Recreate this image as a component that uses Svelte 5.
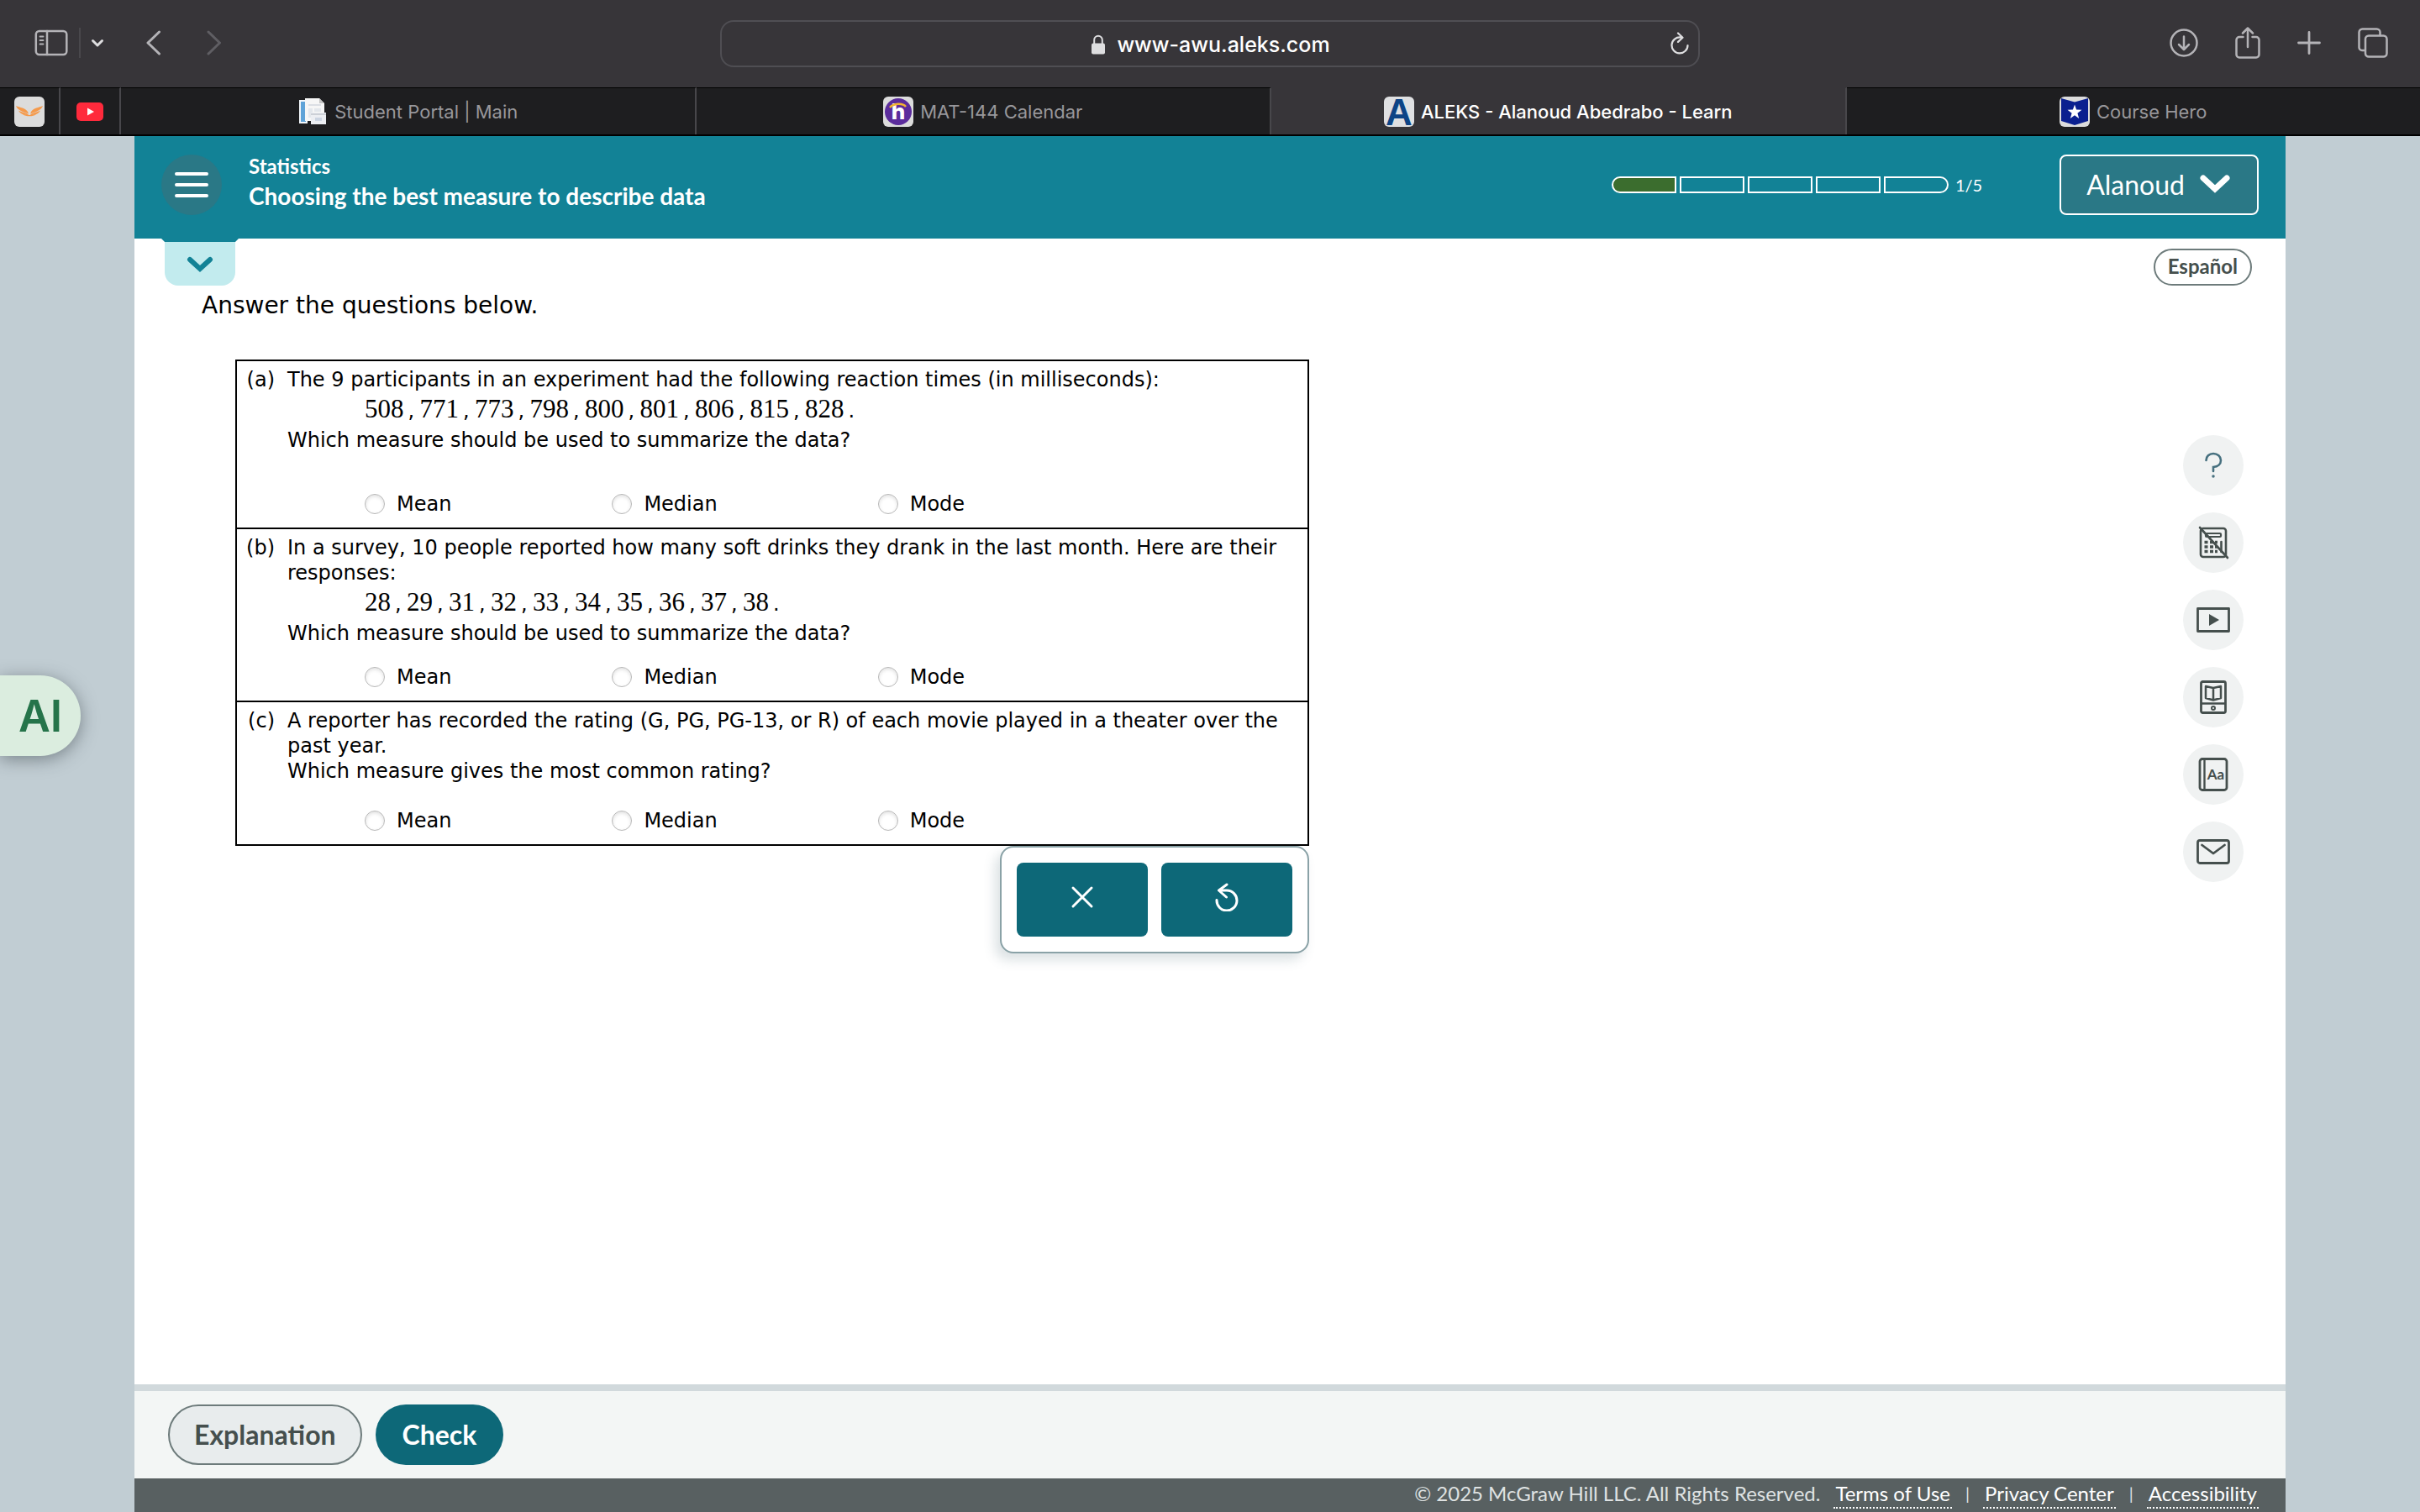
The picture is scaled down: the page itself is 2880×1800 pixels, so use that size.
<script lang="ts">
  type Question = {
    id: string
    intro: string
    data: number[]
    prompt: string
  }

  const questions: Question[] = [
    {
      id: 'a',
      intro: 'The 9 participants in an experiment had the following reaction times (in milliseconds):',
      data: [508, 771, 773, 798, 800, 801, 806, 815, 828],
      prompt: 'Which measure should be used to summarize the data?',
    },
    {
      id: 'b',
      intro: 'In a survey, 10 people reported how many soft drinks they drank in the last month. Here are their responses:',
      data: [28, 29, 31, 32, 33, 34, 35, 36, 37, 38],
      prompt: 'Which measure should be used to summarize the data?',
    },
    {
      id: 'c',
      intro: 'A reporter has recorded the rating (G, PG, PG-13, or R) of each movie played in a theater over the past year.',
      data: [],
      prompt: 'Which measure gives the most common rating?',
    },
  ]

  const measures = ['Mean', 'Median', 'Mode']
  const steps = [1, 2, 3, 4, 5]
  const current = 1

  let answers = $state<Record<string, string>>({ a: '', b: '', c: '' })

  const reset = () => {
    answers = { a: '', b: '', c: '' }
  }
</script>

<div class="window">
  <header class="toolbar">
    <div class="nav-left">
      <button class="icon-btn" aria-label="Sidebar">
        <svg width="40" height="32" viewBox="0 0 40 32" fill="none" stroke="#b4b3b7" stroke-width="2.5" stroke-linecap="round">
          <rect x="1.800" y="2" width="36.500" height="28" rx="4" />
          <path d="M15 2v28" />
          <path d="M6.500 8.500h4M6.500 13h4M6.500 17.500h4" stroke-width="1.800" />
        </svg>
      </button>
      <span class="divider"></span>
      <button class="icon-btn" aria-label="Tab groups">
        <svg width="16" height="12" viewBox="0 0 16 12" fill="none" stroke="#dedee0" stroke-width="3" stroke-linecap="round" stroke-linejoin="round">
          <path d="M2.500 3.500L8 9l5.500-5.500" />
        </svg>
      </button>
      <button class="icon-btn back" aria-label="Back">
        <svg width="18" height="30" viewBox="0 0 18 30" fill="none" stroke="#b4b3b7" stroke-width="3" stroke-linecap="round" stroke-linejoin="round">
          <path d="M15.500 2L2 15l13.500 13" />
        </svg>
      </button>
      <button class="icon-btn forward" aria-label="Forward">
        <svg width="18" height="30" viewBox="0 0 18 30" fill="none" stroke="#5f5e63" stroke-width="3" stroke-linecap="round" stroke-linejoin="round">
          <path d="M2 2l13.500 13L2 28" />
        </svg>
      </button>
    </div>

    <div class="address">
      <span class="url">
        <svg width="16" height="24" viewBox="0 0 16 24">
          <path d="M3.200 11V6.500a4.800 4.800 0 0 1 9.600 0V11" fill="none" stroke="#dedee0" stroke-width="2" />
          <rect x="0" y="10.500" width="16" height="13" rx="2" fill="#dedee0" />
        </svg>
        www-awu.aleks.com
      </span>
      <button class="icon-btn" aria-label="Reload">
        <svg width="24" height="28" viewBox="0 0 24 28" fill="none" stroke="#dedee0" stroke-width="2.200" stroke-linecap="round" stroke-linejoin="round">
          <path d="M13 6.500A9.500 9.500 0 1 0 21.500 16M10 1.500l5.500 5.200-5.500 5.200" />
        </svg>
      </button>
    </div>

    <div class="nav-right">
      <button class="icon-btn" aria-label="Downloads">
        <svg width="34" height="34" viewBox="0 0 34 34" fill="none" stroke="#b4b3b7" stroke-width="2.500" stroke-linecap="round" stroke-linejoin="round">
          <circle cx="17" cy="17" r="15.500" />
          <path d="M17 9.500v15M11 19l6 6 6-6" />
        </svg>
      </button>
      <button class="icon-btn" aria-label="Share">
        <svg width="30" height="38" viewBox="0 0 30 38" fill="none" stroke="#b4b3b7" stroke-width="2.500" stroke-linecap="round" stroke-linejoin="round">
          <path d="M9.500 12H5a3.500 3.500 0 0 0-3.500 3.500V33A3.500 3.500 0 0 0 5 36.500h20a3.500 3.500 0 0 0 3.500-3.500V15.500A3.500 3.500 0 0 0 25 12h-4.500M15 24V2M9 7.500L15 1.500l6 6" />
        </svg>
      </button>
      <button class="icon-btn" aria-label="New tab">
        <svg width="28" height="28" viewBox="0 0 28 28" fill="none" stroke="#b4b3b7" stroke-width="2.800" stroke-linecap="round">
          <path d="M14 1.500v25M1.500 14h25" />
        </svg>
      </button>
      <button class="icon-btn" aria-label="Show tabs">
        <svg width="36" height="36" viewBox="0 0 36 36" fill="none" stroke="#b4b3b7" stroke-width="2.500" stroke-linecap="round" stroke-linejoin="round">
          <rect x="9" y="9.500" width="25.500" height="25" rx="4" />
          <path d="M8.500 27H5a3.500 3.500 0 0 1-3.500-3.500V5.500a4 4 0 0 1 4-4h17a4 4 0 0 1 4 4V9" />
        </svg>
      </button>
    </div>
  </header>

  <nav class="tabs" aria-label="Tabs">
    <a class="pinned" href="#pinned" aria-label="Pinned tab">
      <svg width="36" height="36" viewBox="0 0 36 36">
        <rect width="36" height="36" rx="6" fill="#dcdcdc" />
        <g fill="#f59a4c">
          <path d="M2 11c5 2 11 2.500 14 7l1 2.500C12 18.500 4 17 2 11z" />
          <path d="M5 16.500c4 2.500 9 2 12 5.500C12 22 7 21 5 16.500z" />
          <path d="M34 11c-5 2-11 2.500-14 7l-1 2.500c5-2 13-3.500 15-9.500z" />
          <path d="M31 16.500c-4 2.500-9 2-12 5.500 5 0 10-1 12-5.500z" />
          <path d="M10 21c3 .5 6 .5 8 1 2-.5 5-.5 8-1-2 2-5 2.200-8 2.200S12 23 10 21z" />
        </g>
      </svg>
    </a>
    <a class="pinned" href="#youtube" aria-label="YouTube">
      <svg width="32" height="22" viewBox="0 0 32 22">
        <rect width="32" height="22" rx="5" fill="#ff2a3c" />
        <path d="M13 6.500v9l8-4.500z" fill="#fff" />
      </svg>
    </a>
    <a class="tab" href="#portal">
      <svg width="36" height="36" viewBox="0 0 36 36">
        <rect x="2" y="4" width="10" height="28" fill="#f2f6fa" />
        <rect x="4" y="6" width="6" height="24" fill="#5fa3d8" />
        <path d="M9 2h17l6 6v21H9z" fill="#f6f6f6" />
        <path d="M26 2v6h6z" fill="#c4c4c4" />
        <path d="M13 10h15" stroke="#d3d7de" stroke-width="1.500" />
        <path d="M13 14h5v11h-5zM20 14h8v4h-8z" fill="#e3e7ec" />
        <rect x="16" y="19" width="18" height="14" fill="#eceef2" />
        <path d="M16 21h18" stroke="#c2c6cd" stroke-width="1.500" />
        <rect x="21" y="25" width="8" height="4" fill="#ccd5e2" />
      </svg>
      Student Portal | Main
    </a>
    <a class="tab" href="#calendar">
      <svg width="36" height="36" viewBox="0 0 36 36">
        <rect width="36" height="36" rx="6" fill="#dcdcdc" />
        <circle cx="18" cy="18" r="16" fill="#5b2c9c" />
        <text x="18" y="27" text-anchor="middle" font-size="26" font-weight="800" font-family="Inter, sans-serif" fill="#fff">h</text>
        <path d="M8 13c4-5 15-6 19-1" fill="none" stroke="#f2b431" stroke-width="2.500" />
      </svg>
      MAT-144 Calendar
    </a>
    <a class="tab active" href="#aleks" aria-current="page">
      <svg class="letter-icon" width="36" height="36" viewBox="0 0 36 36">
        <rect width="36" height="36" rx="6" fill="#dfe0e2" />
        <text x="18" y="34" text-anchor="middle" font-size="44" font-weight="800" font-family="'Liberation Sans', sans-serif" fill="#0c4486">A</text>
      </svg>
      ALEKS - Alanoud Abedrabo - Learn
    </a>
    <a class="tab" href="#coursehero">
      <svg width="36" height="36" viewBox="0 0 36 36">
        <rect width="36" height="36" rx="6" fill="#dcdcdc" />
        <path d="M2 2l16 4.500L34 2v27l-16 5-16-5z" fill="#0a1f8f" />
        <path d="M18 9.500l2.100 6.100 6.400.2-5.100 3.900 1.800 6.200-5.200-3.600-5.200 3.600 1.800-6.200-5.100-3.900 6.400-.2z" fill="#fff" />
      </svg>
      Course Hero
    </a>
  </nav>

  <div class="viewport">
    <button class="ai-badge">AI</button>

    <div class="page">
      <header class="lesson-bar">
        <button class="menu" aria-label="Menu">
          <svg width="40" height="32" viewBox="0 0 40 32" stroke="#fff" stroke-width="4" stroke-linecap="round">
            <path d="M2 3h36M2 16h36M2 29h36" />
          </svg>
        </button>
        <div class="titles">
          <span class="subject">Statistics</span>
          <h1>Choosing the best measure to describe data</h1>
        </div>
        <div class="progress">
          <div class="segments">
            {#each steps as step}
              <span class="segment" class:done={step <= current}></span>
            {/each}
          </div>
          <span class="count">{current}/{steps.length}</span>
        </div>
        <button class="user">
          Alanoud
          <svg width="36" height="24" viewBox="0 0 36 24" fill="none" stroke="#fff" stroke-width="7" stroke-linecap="round">
            <path d="M4 5l14 13L32 5" />
          </svg>
        </button>
      </header>

      <main class="content">
        <div class="left">
          <button class="drawer" aria-label="Show details">
            <svg width="32" height="20" viewBox="0 0 32 20" fill="none" stroke="#128296" stroke-width="6" stroke-linecap="round">
              <path d="M4 4l12 11L28 4" />
            </svg>
          </button>
          <p class="lead">Answer the questions below.</p>

          <div class="work">
            <div class="questions">
              {#each questions as q (q.id)}
                <fieldset class="question {q.id}">
                  <span class="letter">({q.id})</span>
                  <div class="body">
                    <p>{q.intro}</p>
                    {#if q.data.length}
                      <p class="data">
                        {#each q.data as n, i}<span class="num">{n}</span><span class="sep">{i < q.data.length - 1 ? ',' : '.'}</span>{/each}
                      </p>
                    {/if}
                    <p>{q.prompt}</p>
                    <div class="options">
                      {#each measures as m}
                        <label>
                          <input type="radio" name="q-{q.id}" value={m} bind:group={answers[q.id]} />
                          {m}
                        </label>
                      {/each}
                    </div>
                  </div>
                </fieldset>
              {/each}
            </div>

            <div class="actions">
              <button aria-label="Clear" onclick={reset}>
                <svg width="28" height="28" viewBox="0 0 28 28" stroke="#fff" stroke-width="3" stroke-linecap="round">
                  <path d="M3 3l22 22M25 3L3 25" />
                </svg>
              </button>
              <button aria-label="Undo" onclick={reset}>
                <svg width="28" height="34" viewBox="0 0 28 34" fill="none" stroke="#fff" stroke-width="3" stroke-linecap="round" stroke-linejoin="round">
                  <path d="M2 20.500a12 12 0 1 0 12-11.500H5M14 2L4.500 9l9 8" />
                </svg>
              </button>
            </div>
          </div>
        </div>

        <aside class="right">
          <button class="language">Español</button>
          <div class="tools">
            <button aria-label="Help">
              <svg width="40" height="40" viewBox="0 0 40 40" fill="none" stroke="#46707f" stroke-width="2.600" stroke-linecap="round">
                <path d="M11.500 14c0-4.500 3.500-8 8.500-8s9 3.500 9 8-3.500 7.500-9 8v5" />
                <circle cx="20" cy="33" r="1" fill="#46707f" stroke-width="1.500" />
              </svg>
            </button>
            <button aria-label="Calculator unavailable">
              <svg width="40" height="40" viewBox="0 0 40 40" fill="none" stroke="#454f4d" stroke-width="2.600" stroke-linecap="round">
                <rect x="5" y="3" width="30" height="34" rx="3" />
                <rect x="11" y="9" width="18" height="4" rx="1" stroke-width="2.200" />
                <path d="M9.500 19.500h4M16 19.500h4M22 19.500h3M9.500 25h4M16 25h4M22 25h3M9.500 30.500h4M16 30.500h4M22 30.500h3" stroke-width="3.500" stroke-linecap="butt" />
                <path d="M29.500 19v12" />
                <path d="M4 2l33 36" />
              </svg>
            </button>
            <button aria-label="Video">
              <svg width="40" height="40" viewBox="0 0 40 40" fill="none" stroke="#454f4d" stroke-width="2.800" stroke-linejoin="round">
                <rect x="1.500" y="6.500" width="37" height="27" />
                <path d="M15 13v14l12-7z" fill="#454f4d" stroke="none" />
              </svg>
            </button>
            <button aria-label="eBook">
              <svg width="40" height="40" viewBox="0 0 40 40" fill="none" stroke="#454f4d" stroke-width="2.800" stroke-linejoin="round">
                <rect x="5.500" y="1.500" width="29" height="37" rx="2" />
                <path d="M5.500 27.500h29M11 7l9 2 9-2v14l-9 2.500-9-2.500zM20 9v14.500" stroke-width="2.500" />
                <circle cx="20" cy="33" r="2" stroke-width="2" />
              </svg>
            </button>
            <button aria-label="Dictionary">
              <svg width="40" height="40" viewBox="0 0 40 40" fill="none" stroke="#454f4d" stroke-width="2.800">
                <rect x="4" y="1.500" width="32" height="37" rx="3" />
                <path d="M9.500 2v36" stroke-width="2.400" />
                <text x="23" y="26" text-anchor="middle" font-size="17" font-weight="700" font-family="Lato, sans-serif" fill="#454f4d" stroke="none">Aa</text>
              </svg>
            </button>
            <button aria-label="Message">
              <svg width="40" height="40" viewBox="0 0 40 40" fill="none" stroke="#454f4d" stroke-width="2.800" stroke-linecap="round" stroke-linejoin="round">
                <rect x="1.500" y="6.500" width="37" height="27" rx="2.500" />
                <path d="M6.500 12L20 22l13.500-10" />
              </svg>
            </button>
          </div>
        </aside>
      </main>

      <div class="submit-bar">
        <button class="explain">Explanation</button>
        <button class="check">Check</button>
      </div>

      <footer>
        <span class="copyright">© 2025 McGraw Hill LLC. All Rights Reserved.</span>
        <a href="#terms">Terms of Use</a>
        <span class="bar">|</span>
        <a href="#privacy">Privacy Center</a>
        <span class="bar">|</span>
        <a href="#accessibility">Accessibility</a>
      </footer>
    </div>
  </div>
</div>

<style>
  :global(body) {
    background: #c1cdd3;
  }

  .window {
    min-height: 100vh;
    display: flex;
    flex-direction: column;
    font-family: Lato, 'Open Sans', sans-serif;
  }

  button {
    font: inherit;
    border: none;
    padding: 0;
    margin: 0;
    cursor: pointer;
  }

  svg {
    display: block;
    flex: none;
  }

  .letter-icon {
    overflow: visible;
  }

  .toolbar {
    display: grid;
    grid-template-columns: 1fr 40.5% 1fr;
    align-items: center;
    height: 104px;
    background: #373539;
    font-family: Inter, 'Liberation Sans', sans-serif;
  }

  .icon-btn {
    background: none;
  }

  .nav-left,
  .nav-right {
    display: flex;
    align-items: center;
    padding-bottom: 2px;
  }

  .nav-left {
    padding-left: 41px;
  }

  .nav-right {
    justify-content: flex-end;
    gap: 44px;
    padding-right: 38px;
  }

  .divider {
    width: 2px;
    height: 36px;
    margin: 0 12px 0 13px;
    background: #49484c;
  }

  .back {
    margin-left: 50px;
  }

  .forward {
    margin-left: 54px;
  }

  .address {
    display: flex;
    align-items: center;
    height: 56px;
    box-sizing: border-box;
    border: 2px solid #4f4e53;
    border-radius: 16px;
    padding-right: 10px;
  }

  .url {
    flex: 1;
    display: flex;
    align-items: center;
    justify-content: center;
    gap: 14px;
    padding: 2px 0 0 36px;
    font-size: 25px;
    font-weight: 500;
    color: #fff;
  }

  .tabs {
    display: flex;
    height: 58px;
    box-sizing: border-box;
    background: #1e1e20;
    border-bottom: 2px solid #000;
    font-family: Inter, 'Liberation Sans', sans-serif;
  }

  .pinned,
  .tab {
    display: flex;
    align-items: center;
    justify-content: center;
    box-sizing: border-box;
    border-top: 1px solid #000;
    border-right: 2px solid #48474b;
  }

  .pinned {
    width: 72px;
  }

  .tab {
    flex: 1;
    gap: 8px;
    font-size: 22px;
    color: #98979b;
    text-decoration: none;
  }

  .tab:last-child {
    border-right: none;
  }

  .tab.active {
    background: #373539;
    border-top-color: #373539;
    font-weight: 500;
    color: #fff;
  }

  .viewport {
    flex: 1;
    display: flex;
    position: relative;
    padding: 0 160px;
  }

  .ai-badge {
    position: absolute;
    left: 0;
    top: 642px;
    width: 96px;
    height: 96px;
    border-radius: 0 48px 48px 0;
    background: #dbeddf;
    color: #25744a;
    font-family: Inter, sans-serif;
    font-size: 52px;
    font-weight: 600;
    box-shadow: 0 4px 20px rgba(50, 60, 65, 0.5);
  }

  .page {
    flex: 1;
    display: flex;
    flex-direction: column;
    background: #fff;
  }

  .lesson-bar {
    display: flex;
    align-items: center;
    height: 122px;
    box-sizing: border-box;
    padding: 0 32px 6px;
    background: #128296;
    color: #fff;
  }

  .menu {
    display: flex;
    align-items: center;
    justify-content: center;
    width: 72px;
    height: 72px;
    border-radius: 50%;
    background: #2a7886;
  }

  .titles {
    flex: 1;
    margin-left: 32px;
    padding-bottom: 10px;
    font-weight: 700;
  }

  .subject {
    display: block;
    font-size: 24px;
    line-height: 36px;
  }

  h1 {
    margin: 0;
    font-size: 28px;
    line-height: 34px;
    font-weight: 700;
  }

  .progress {
    display: flex;
    align-items: center;
    gap: 8px;
    margin-right: 92px;
    font-size: 20px;
  }

  .segments {
    display: flex;
    gap: 4px;
  }

  .segment {
    width: 77px;
    height: 20px;
    box-sizing: border-box;
    border: 2px solid #fff;
  }

  .segment.done {
    background: #3b6d2e;
  }

  .segment:first-child {
    border-radius: 10px 0 0 10px;
  }

  .segment:last-child {
    border-radius: 0 10px 10px 0;
  }

  .user {
    display: flex;
    align-items: center;
    gap: 18px;
    height: 72px;
    padding: 0 32px 2px 30px;
    border: 2px solid #fff;
    border-radius: 8px;
    background: #2a7886;
    color: #fff;
    font-size: 32px;
  }

  .content {
    flex: 1;
    display: flex;
    justify-content: space-between;
  }

  .left {
    padding-left: 36px;
    font-family: 'DejaVu Sans', sans-serif;
  }

  .drawer {
    position: relative;
    display: flex;
    align-items: center;
    justify-content: center;
    width: 84px;
    height: 56px;
    padding-top: 6px;
    border-radius: 0 0 16px 16px;
    background: #c2ebee;
  }

  .drawer::before {
    content: '';
    position: absolute;
    top: 0;
    left: -4px;
    right: -4px;
    height: 4px;
    background: #128296;
    clip-path: polygon(0 0, 100% 0, calc(100% - 4px) 100%, 4px 100%);
  }

  .lead {
    margin: 6px 0 0 44px;
    font-size: 28px;
    line-height: 36px;
  }

  .work {
    display: flex;
    flex-direction: column;
    align-items: flex-end;
    width: 1278px;
    margin: 46px 0 0 84px;
  }

  .questions {
    width: 100%;
    box-sizing: border-box;
    border: 2px solid #000;
    font-size: 24px;
    line-height: 30px;
  }

  .question {
    display: flex;
    gap: 15px;
    min-width: 0;
    margin: 0;
    border: none;
    padding: 7px 10px 13px;
  }

  .question + .question {
    border-top: 2px solid #000;
  }

  .letter {
    width: 35px;
    text-align: right;
  }

  .body {
    flex: 1;
  }

  p {
    margin: 0;
  }

  .data {
    display: flex;
    align-items: baseline;
    height: 42px;
    box-sizing: border-box;
    padding: 5px 0 0 92px;
  }

  .num {
    font-family: 'Liberation Serif', serif;
    font-size: 31px;
  }

  .sep {
    width: 14px;
    padding-left: 5px;
  }

  .options {
    display: flex;
    gap: 191px;
    margin-top: 22px;
    padding-left: 92px;
  }

  .a .options {
    margin-top: 46px;
  }

  .c .options {
    margin-top: 29px;
  }

  label {
    display: flex;
    align-items: center;
    gap: 14px;
  }

  input[type='radio'] {
    appearance: none;
    width: 24px;
    height: 24px;
    margin: 0;
    border: 1px solid #b8b8b8;
    border-radius: 50%;
    background: #fff;
    box-shadow: inset 0 2px 4px rgba(0, 0, 0, 0.12);
  }

  input[type='radio']:checked {
    border: 8px solid #0d6878;
  }

  .actions {
    display: flex;
    gap: 16px;
    padding: 18px;
    border: 2px solid #8aa2a7;
    border-radius: 16px;
    background: #fff;
    box-shadow: -6px 8px 14px rgba(80, 110, 120, 0.2);
  }

  .actions button {
    display: flex;
    align-items: center;
    justify-content: center;
    width: 156px;
    height: 88px;
    padding-bottom: 6px;
    border-radius: 8px;
    background: #0d6878;
  }

  .right {
    display: flex;
    flex-direction: column;
    align-items: flex-end;
    padding: 12px 40px 0 0;
  }

  .language {
    height: 44px;
    padding: 0 15px 4px;
    border: 2px solid #6d7b7b;
    border-radius: 22px;
    background: #fff;
    color: #454f4d;
    font-size: 24px;
    font-weight: 700;
  }

  .tools {
    display: flex;
    flex-direction: column;
    gap: 20px;
    margin: 178px 10px 0 0;
  }

  .tools button {
    display: flex;
    align-items: center;
    justify-content: center;
    width: 72px;
    height: 72px;
    border-radius: 50%;
    background: #f0f2f2;
  }

  .submit-bar {
    display: flex;
    align-items: center;
    gap: 16px;
    height: 104px;
    padding-left: 40px;
    border-top: 8px solid #d1d9dc;
    background: #f3f6f5;
    font-size: 32px;
    font-weight: 700;
  }

  .submit-bar button {
    height: 72px;
    border-radius: 36px;
  }

  .submit-bar .explain {
    padding: 0 29px 2px;
    border: 2px solid #6d7b7b;
    background: #e8eced;
    color: #454f4d;
  }

  .submit-bar .check {
    padding: 0 32px 2px;
    background: #0d6878;
    color: #fff;
  }

  footer {
    display: flex;
    align-items: flex-start;
    justify-content: flex-end;
    gap: 16px;
    height: 40px;
    box-sizing: border-box;
    padding: 4px 32px 0 0;
    background: #586061;
    color: #fff;
    font-size: 24px;
    line-height: 28px;
  }

  .copyright {
    color: #dfe2e2;
  }

  .bar {
    font-size: 20px;
    color: #dfe2e2;
  }

  footer a {
    padding: 0 2px 2px;
    border-bottom: 2px dotted #fff;
    color: #fff;
    text-decoration: none;
  }
</style>
